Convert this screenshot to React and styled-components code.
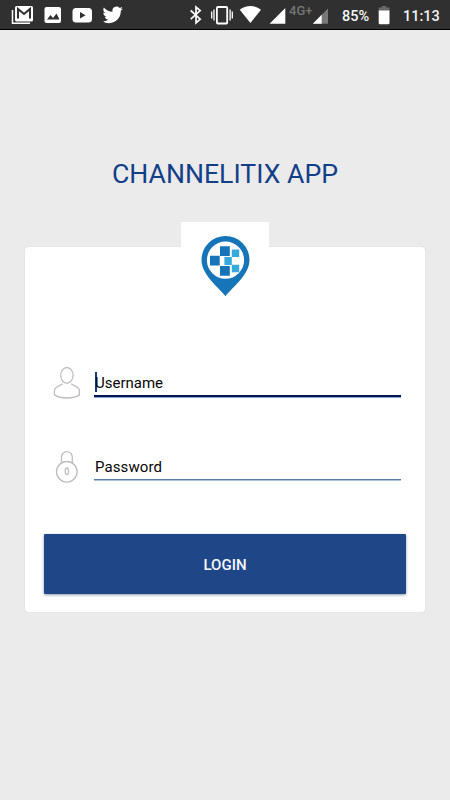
import React from "react";
import styled, { createGlobalStyle } from "styled-components";

const GlobalStyle = createGlobalStyle`
  * { box-sizing: border-box; }
  body { margin: 0; background: #ebebeb; font-family: Roboto, sans-serif; }
`;

const Screen = styled.main`
  display: flex;
  flex-direction: column;
  height: 800px;
  width: 450px;
  overflow: hidden;
  background: #ebebeb;
`;

const StatusBar = styled.header`
  flex: none;
  display: flex;
  height: 30px;
  background: #303030;
  border-bottom: 1px solid #000;
  color: #fff;
`;

const StatusIcons = styled.svg`
  flex: none;
  display: block;
  width: ${(p) => p.$width}px;
  height: 29px;
`;

const StatusText = styled.span`
  flex: none;
  width: ${(p) => p.$width}px;
  font-size: ${(p) => p.$size || 14.5}px;
  font-weight: 500;
  line-height: ${(p) => p.$line || 33}px;
  color: ${(p) => p.$color || "#f4f4f4"};
  white-space: nowrap;
`;

const Title = styled.h1`
  margin: 127px 0 0;
  height: 34px;
  line-height: 34px;
  font-size: 26.65px;
  font-weight: 400;
  text-align: center;
  color: #123f88;
  white-space: nowrap;
`;

const Card = styled.form`
  display: flex;
  flex-direction: column;
  width: 400px;
  height: 365px;
  margin: 56px 25px 0;
  padding: 0 19px;
  background: #fff;
  border-radius: 3px;
  box-shadow: 0 0 1px rgba(0, 0, 0, 0.22);
`;

const LogoTile = styled.div`
  align-self: center;
  flex: none;
  width: 88px;
  height: 88px;
  margin-top: -25px;
  background: #fff;
`;

const Logo = styled.svg`
  display: block;
  width: 88px;
  height: 88px;
`;

const Field = styled.label`
  flex: none;
  display: flex;
  height: 36px;
  margin-top: ${(p) => p.$gap}px;
  padding-left: 7px;
`;

const FieldIcon = styled.svg`
  flex: none;
  width: 32px;
  height: 36px;
  margin-right: 11px;
  fill: none;
  stroke: #bdbdbd;
  stroke-width: 1.3;
`;

const FieldLine = styled.span`
  display: flex;
  align-items: flex-start;
  width: 307px;
  height: ${(p) => (p.$active ? 33 : 31)}px;
  padding-top: ${(p) => (p.$active ? 8 : 7)}px;
  border-bottom: ${(p) => (p.$active ? "2px solid #061650" : "1px solid #587ba8")};
  box-shadow: 0 1px 0 ${(p) => (p.$active ? "#8da9d6" : "#b0c2d8")};
`;

const Caret = styled.i`
  width: 2px;
  height: 20px;
  margin: 0 -1px 0 1px;
  background: #123a7d;
`;

const FieldText = styled.span`
  font-size: 15px;
  line-height: 22px;
  color: #050505;
  margin-left: ${(p) => p.$inset || 0}px;
  letter-spacing: ${(p) => p.$spacing || 0}px;
`;

const LoginButton = styled.button`
  flex: none;
  height: 60px;
  width: 362px;
  margin-top: 49px;
  border: 0;
  border-radius: 1px;
  padding: 0;
  background: #1f4788;
  box-shadow: 0 1px 3px rgba(0, 20, 65, 0.45);
  color: #f5f8ff;
  font: 500 15px/62px Roboto, sans-serif;
`;

function PhoneStatus() {
  return (
    <StatusBar>
      <StatusIcons $width={289} viewBox="0 0 289 29">
        <path d="M12.5 10v13.3H30" fill="none" stroke="#fff" strokeWidth="1.5" />
        <rect x="15" y="6" width="18" height="15.5" rx="1.5" fill="#fff" />
        <path d="M18 18.5V9l6 5 6-5v9.5" fill="none" stroke="#303030" strokeWidth="2" />
        <rect x="44.5" y="7" width="16.5" height="16" rx="2" fill="#fff" />
        <path d="M47 19.5l3.5-4.5 2.5 3 3.5-4.5 3 6z" fill="#303030" />
        <rect x="72.5" y="8" width="19.5" height="14.5" rx="3.5" fill="#fff" />
        <path d="M80 12v6.5l5.5-3.2z" fill="#303030" />
        <path
          transform="translate(102.5 4.7) scale(.85)"
          d="M23.95 4.57a10 10 0 0 1-2.82.77 4.96 4.96 0 0 0 2.16-2.72 9.96 9.96 0 0 1-3.13 1.18 4.92 4.92 0 0 0-8.38 4.48C7.69 8.1 4.07 6.13 1.64 3.16a4.82 4.82 0 0 0-.67 2.48c0 1.71.87 3.21 2.19 4.1a4.9 4.9 0 0 1-2.23-.62v.06a4.92 4.92 0 0 0 3.95 4.83 5 5 0 0 1-2.21.08 4.94 4.94 0 0 0 4.6 3.42A9.87 9.87 0 0 1 0 19.54a14 14 0 0 0 7.55 2.21c9.05 0 14-7.5 14-13.98l-.02-.64a9.94 9.94 0 0 0 2.42-2.56z"
          fill="#fff"
        />
        <path d="M190.7 10.5l9.5 8.7-4.2 3.6V7l4.2 3.6-9.5 8.6" fill="none" stroke="#fff" strokeWidth="1.7" />
        <g fill="none" stroke="#fff">
          <rect x="216.9" y="7" width="10.3" height="16.5" rx="1" strokeWidth="1.8" />
          <path d="M214 9.5v11M230.1 9.5v11M211.7 11.5v7M232.3 11.5v7" strokeWidth="1.3" />
        </g>
        <path d="M239.8 9.7C246 4.8 255 4.8 261 9.7L250.4 23z" fill="#fff" />
        <path d="M269.8 23.7V23.6L285.3 8v15.7z" fill="#fff" />
      </StatusIcons>
      <StatusText $width={23} $size={13} $line={22} $color="#757575">4G+</StatusText>
      <StatusIcons $width={30} viewBox="0 0 30 29">
        <path d="M.8 23.7L16 8.4v15.3z" fill="#787878" />
        <path d="M.8 23.7L9.7 14.8v8.9z" fill="#fff" />
      </StatusIcons>
      <StatusText $width={34}>85%</StatusText>
      <StatusIcons $width={27} viewBox="0 0 27 29">
        <path d="M2.7 7.5h3V6h4.6v1.5h3.2V11H2.7z" fill="#686868" />
        <path d="M2.7 10.5h10.8V23a1.3 1.3 0 0 1-1.3 1.3H4A1.3 1.3 0 0 1 2.7 23z" fill="#fff" />
      </StatusIcons>
      <StatusText $width={42}>11:13</StatusText>
    </StatusBar>
  );
}

function LocationLogo() {
  return (
    <Logo viewBox="181 222 88 88">
      <path d="M225.5 296.3C219 287.5 201.5 275 201.5 260a24 24 0 0 1 48 0c0 15-17.5 27.5-24 36.3z" fill="#1674b9" />
      <circle cx="225.5" cy="260.2" r="18.6" fill="#fff" />
      <path d="M220 246.2h9.8v9.9H220zM210 255.8h9.7v9.7H210zM220 266h9.8v9.8H220z" fill="#1674b9" />
      <path d="M224.4 257.1h7.4v7.8h-7.4zM231.8 249.6h7.4v7.4h-7.4zM231.8 264.8h7.4v7.5h-7.4z" fill="#36a9dd" />
    </Logo>
  );
}

export default function App() {
  return (
    <>
      <GlobalStyle />
      <Screen>
        <PhoneStatus />
        <Title>CHANNELITIX APP</Title>
        <Card>
          <LogoTile><LocationLogo /></LogoTile>
          <Field $gap={54}>
            <FieldIcon viewBox="51 364 32 36">
              <ellipse cx="66.9" cy="375.3" rx="6.2" ry="7.8" />
              <path d="M62.6 383.8c-2 2-8.2 2.6-8.2 6.8v4.2c5 4.3 20 4.3 25 0v-4.2c0-4.2-6.2-4.8-8.2-6.8" />
            </FieldIcon>
            <FieldLine $active>
              <Caret />
              <FieldText $inset={-1}>Username</FieldText>
            </FieldLine>
          </Field>
          <Field $gap={49}>
            <FieldIcon viewBox="51 449 32 36">
              <path d="M61.5 463v-6a5.4 5.4 0 0 1 10.8 0v6" />
              <circle cx="66.8" cy="471.8" r="10.3" />
              <ellipse cx="66.9" cy="471.3" rx="1.7" ry="3.3" />
            </FieldIcon>
            <FieldLine><FieldText $inset={1} $spacing={0.1}>Password</FieldText></FieldLine>
          </Field>
          <LoginButton type="button">LOGIN</LoginButton>
        </Card>
      </Screen>
    </>
  );
}
